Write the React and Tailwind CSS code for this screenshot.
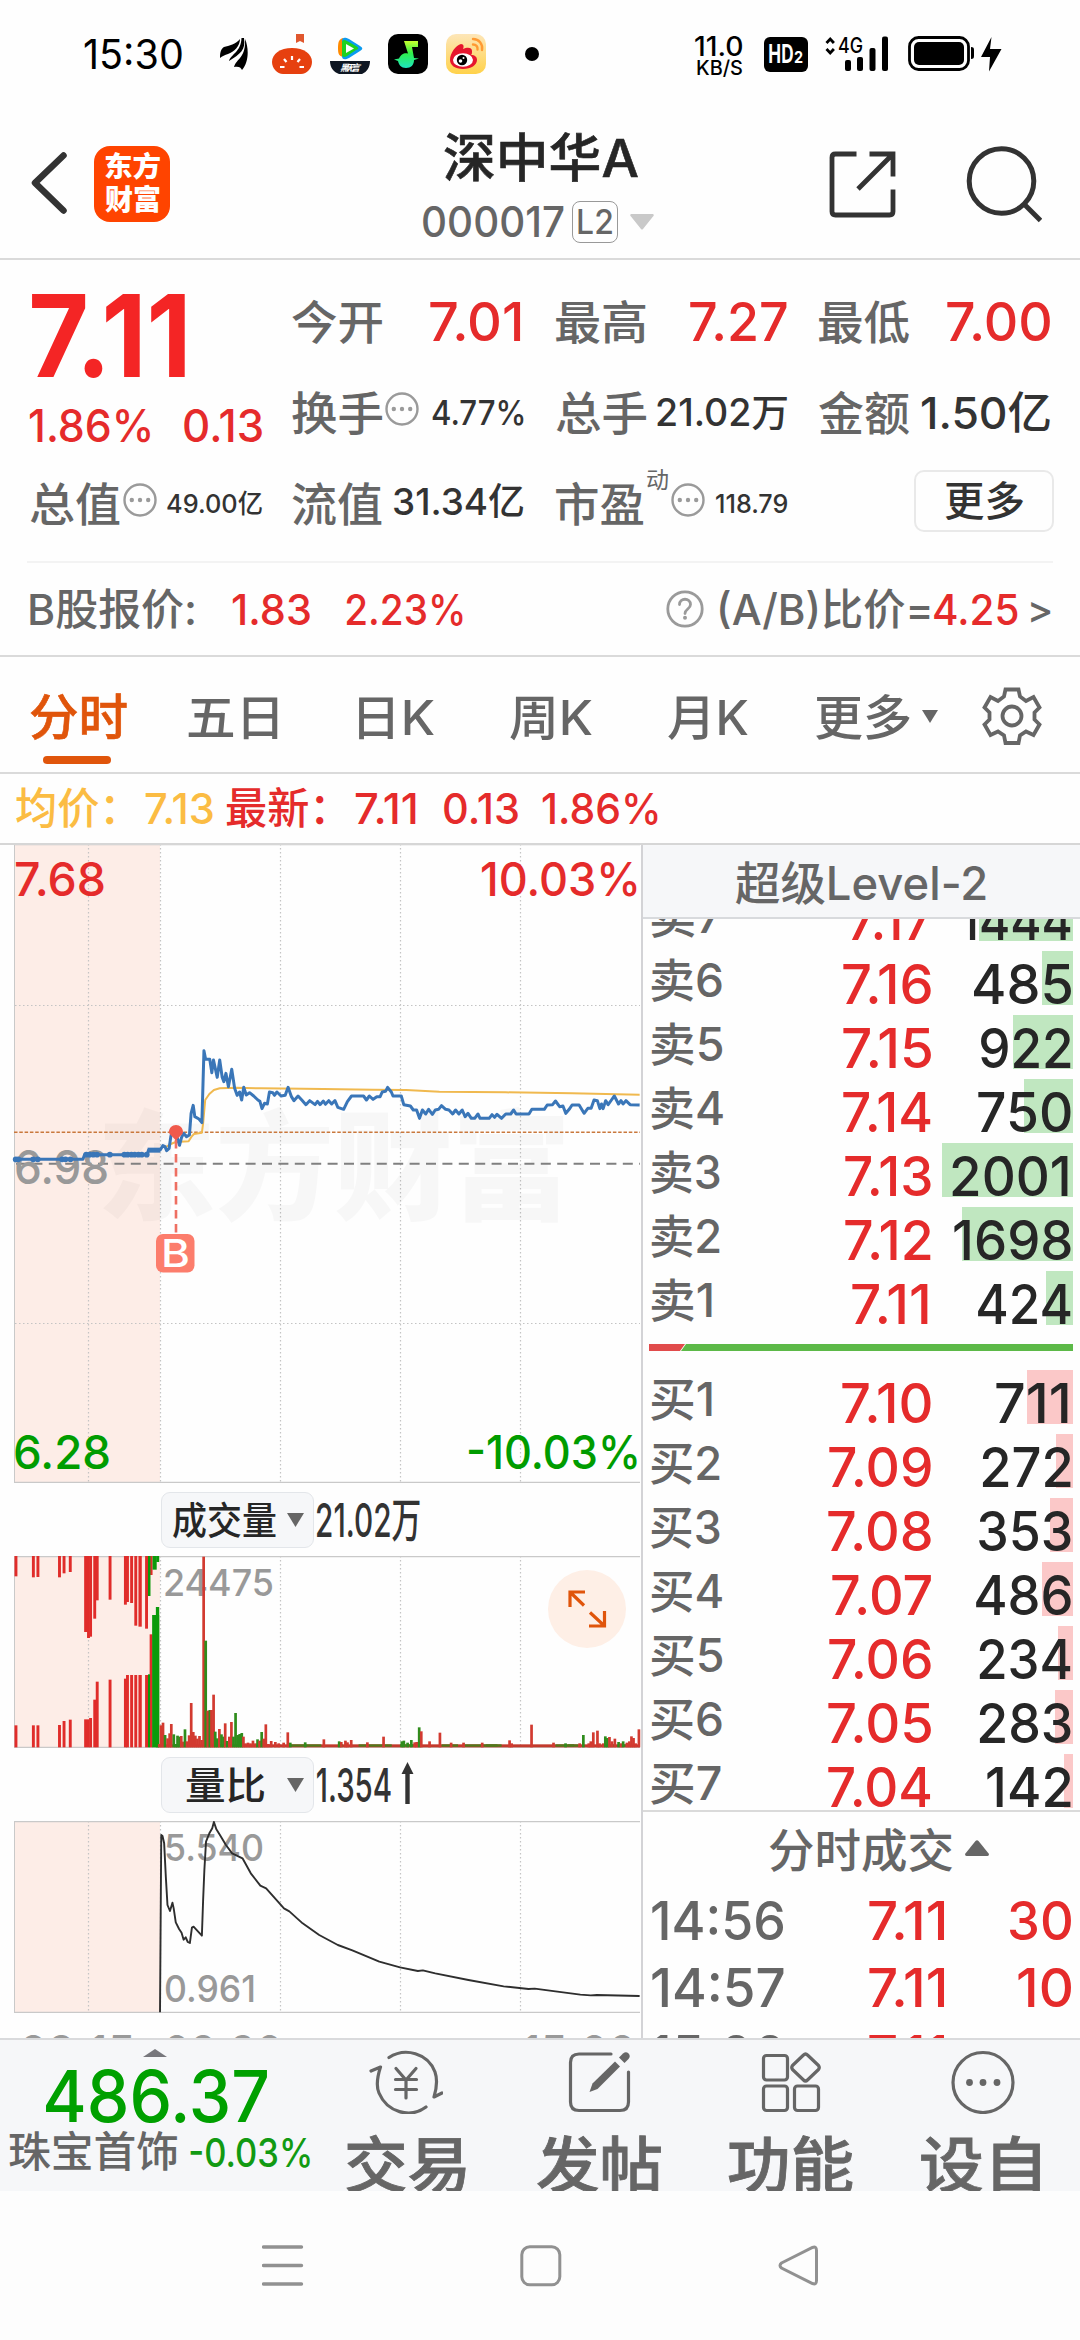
import { useLayoutEffect, useRef, useState } from "react";

// Single-line text that is squeezed or stretched so its ink fills exactly `w` pixels.
function Fit({ w, className = "", children }) {
  const ref = useRef(null);
  const [transform, setTransform] = useState("none");
  useLayoutEffect(() => {
    const cs = getComputedStyle(ref.current);
    const ctx = document.createElement("canvas").getContext("2d");
    ctx.font = `${cs.fontWeight} ${cs.fontSize} ${cs.fontFamily}`;
    const m = ctx.measureText(ref.current.textContent);
    const ink = m.actualBoundingBoxLeft + m.actualBoundingBoxRight;
    const s = w / ink;
    setTransform(`translateX(${m.actualBoundingBoxLeft * s}px) scaleX(${s})`);
  }, [w, children]);
  return (
    <span className={`block shrink-0 whitespace-nowrap leading-none ${className}`} style={{ width: w }}>
      <span ref={ref} className="inline-block origin-left whitespace-pre" style={{ transform }}>
        {children}
      </span>
    </span>
  );
}

const CHART_T = "scale(0.41454 0.33333)";

function StatusBar() {
  return (
    <div className="flex h-[108px] shrink-0 items-center pl-[84px] text-black">
      <Fit w={98} className="text-[41px] font-normal">15:30</Fit>
      <svg className="ml-[38px]" width="28" height="40" viewBox="220 34 28 40">
        <path d="M220 58C220 52 221 49 224 47C229 46 236 44 240 39C240 46 234 52 228 54C225 55 222 56 220 58Z" />
        <path d="M229 61C231 54 241 52 241.5 38L244 38C246 50 240 54 229 61Z" />
        <path d="M234 67C237 58 246 58 245 39C249 48 249 62 242 70C241 67 238 66 234 67Z" />
      </svg>
      <svg className="ml-6" width="40" height="40" viewBox="0 0 40 40">
        <path d="M24 0h8v9l-4-2-4 2z" fill="#e0572e" />
        <path d="M20 14c12 0 20 6 20 14 0 6-5 12-11 12H11C5 40 0 34 0 28 0 20 8 14 20 14z" fill="#e6400f" />
        <path d="M20 22v4M12 25l2.500 3M28 25l-2.500 3M8 33h4.500M32 33h-4.500" stroke="#fff" strokeWidth="2.200" />
      </svg>
      <svg className="ml-[18px]" width="40" height="40" viewBox="0 0 40 40">
        <path d="M13 4C9 5 8 8 8 14s1 8 5 9z" fill="#ff8a00" />
        <path d="M12 7c0-4 3-4 7-2l11 7c3 2 3 3 0 5l-11 7c-4 2-7 2-7-2z" fill="#0a9bf0" />
        <path d="M12 9c0-3 2-4 5-2l9 5c3 2 3 3 0 4l-9 6c-3 2-5 1-5-2z" fill="#1fd11f" />
        <path d="M16 10l8 4.500-8 4.500z" fill="#fff" />
        <path d="M0 27h40c0 6-3 11-8 13H9C3 38 0 33 0 27z" fill="#0e1622" />
        <text x="10" y="37" fontSize="9" fontWeight="700" fontStyle="italic" fill="#fff" textLength="20">黑无言</text>
      </svg>
      <svg className="ml-[18px]" width="40" height="40" viewBox="0 0 40 40">
        <defs>
          <linearGradient id="note" x1="0" y1="0" x2="0" y2="1">
            <stop offset="0" stopColor="#c8ff2e" />
            <stop offset="0.45" stopColor="#2ff04a" />
            <stop offset="1" stopColor="#1ee5c0" />
          </linearGradient>
        </defs>
        <rect width="40" height="40" rx="10" />
        <path d="M16 7h14v6h-6l2 11 5 .500-5 1.500c0 5-3 8-8 8s-7-3-8-7l-4-1.500 5-1c2-5 6-6 9-5z" fill="url(#note)" />
      </svg>
      <svg className="ml-[18px]" width="40" height="40" viewBox="0 0 40 40">
        <defs>
          <linearGradient id="wb" x1="0" y1="0" x2="0" y2="1">
            <stop offset="0" stopColor="#fde6b8" />
            <stop offset="1" stopColor="#ffd24a" />
          </linearGradient>
        </defs>
        <rect width="40" height="40" rx="10" fill="url(#wb)" />
        <path d="M4 26C4 19 10 11 15 10c3 0 3 3 2 5 4-2 9-2 9 2 0 2 0 3-1 4 4 0 6 2 6 5 0 5-6 9-14 9S4 31 4 26z" fill="#e6162d" />
        <ellipse cx="17" cy="26" rx="10" ry="6.800" fill="#fff" />
        <circle cx="16" cy="26" r="5.200" />
        <circle cx="14.500" cy="27" r="1.800" fill="#fff" />
        <circle cx="17.500" cy="24" r="1" fill="#fff" />
        <path d="M27 5c6 0 10 5 9 11M27 10.500c3 0 5 2 4.500 5" fill="none" stroke="#ff9a33" strokeWidth="2.400" strokeLinecap="round" />
      </svg>
      <span className="ml-[39px] size-3.5 rounded-full bg-black" />
      <div className="ml-[156px] flex flex-col items-end gap-0 pt-0.5 font-medium">
        <Fit w={47} className="text-[27px]">11.0</Fit>
        <Fit w={45} className="-mt-[2px] text-[20px]">KB/S</Fit>
      </div>
      <div className="ml-[22px] flex h-[35px] w-11 items-center justify-center rounded-md bg-black text-white">
        <Fit w={24} className="text-[26px] font-bold">HD</Fit>
        <Fit w={9} className="ml-px mt-1.5 text-[16px] font-bold">2</Fit>
      </div>
      <svg className="ml-[17px]" width="64" height="36" viewBox="825 36 64 36">
        <path d="M826.500 43l3.700-4 3.700 4M826.500 49l3.700 4 3.700-4" fill="none" stroke="#000" strokeWidth="2.800" />
        <text x="838" y="53" fontSize="22" fontWeight="500" textLength="25" lengthAdjust="spacingAndGlyphs">4G</text>
        <rect x="845" y="60" width="6" height="11" rx="2" />
        <rect x="857" y="57" width="6" height="14" rx="2" />
        <rect x="869.500" y="48" width="6" height="23" rx="2" />
        <rect x="882" y="36.500" width="6" height="34.500" rx="2" />
      </svg>
      <svg className="ml-[19px]" width="95" height="36" viewBox="908 36 95 36">
        <rect x="909.500" y="37.500" width="59" height="32" rx="9" fill="none" stroke="#000" strokeWidth="2.800" />
        <rect x="914" y="42" width="50" height="23" rx="5" />
        <path d="M971 47c2.500 0 3 1 3 3v6c0 2-.500 3-3 3z" />
        <path d="M991.500 37L981 57h9l-1 14.500L1001.500 49H990z" />
      </svg>
    </div>
  );
}

function Header() {
  return (
    <header className="flex h-[152px] shrink-0 items-center border-b-2 border-[#dadada] pl-[30px]">
      <svg width="38" height="64" viewBox="30 152 38 64">
        <path d="M63.500 156.500L35 183.800L63.500 211.500" fill="none" stroke="#333" strokeWidth="6.500" strokeLinecap="round" strokeLinejoin="round" />
      </svg>
      <div className="ml-[26px] mt-px flex h-[76px] w-[76px] flex-col items-center justify-center gap-[5px] rounded-[16px] bg-[#ff4400] font-black text-white">
        <Fit w={55} className="text-[28px]">东方</Fit>
        <Fit w={55} className="text-[28px]">财富</Fit>
      </div>
      <div className="ml-[253px] flex flex-col pt-[9px]">
        <Fit w={194} className="ml-[21px] text-[52px] font-medium text-[#262626] [-webkit-text-stroke:0.6px]">深中华A</Fit>
        <div className="mt-4 flex items-center text-[#666]">
          <Fit w={141} className="text-[42px] font-medium">000017</Fit>
          <div className="ml-2 flex h-[42px] w-[46px] items-center justify-center rounded-lg border-[1.5px] border-[#999]">
            <Fit w={34} className="text-[34px] font-medium">L2</Fit>
          </div>
          <svg className="ml-3" width="24" height="16" viewBox="0 0 24 16">
            <path d="M1 0h22q1.500 1 0 2.500L13 15q-1 1-2 0L1 2.500q-1.500-1.500 0-2.500z" fill="#c9c9c9" />
          </svg>
        </div>
      </div>
      <svg className="ml-[175px] mt-0.5" width="67" height="67" viewBox="828.500 150.500 67 67" fill="none" stroke="#333" strokeWidth="4.800">
        <path d="M856 153.500H835q-3.500 0-3.500 3.500V211q0 3.500 3.500 3.500H889q3.500 0 3.500-3.500V189M869 153.500H892.500V176M892 154L857.500 188.500" />
      </svg>
      <svg className="ml-[70px] mt-px" width="76" height="78" viewBox="965 144 76 78" fill="none" stroke="#333" strokeWidth="5">
        <circle cx="1000.500" cy="180" r="32.300" />
        <path d="M1023.500 203.500L1039.500 219.500" />
      </svg>
    </header>
  );
}

function Dots({ className = "" }) {
  return (
    <svg className={`shrink-0 ${className}`} width="34" height="34" viewBox="0 0 34 34">
      <circle cx="17" cy="17" r="15.500" fill="none" stroke="#9a9a9a" strokeWidth="2.400" />
      <circle cx="8.800" cy="17" r="2.200" fill="#9a9a9a" />
      <circle cx="17" cy="17" r="2.200" fill="#9a9a9a" />
      <circle cx="25.200" cy="17" r="2.200" fill="#9a9a9a" />
    </svg>
  );
}

function Cell({ label, lw = 90, extra, children }) {
  return (
    <div className="flex h-[91px] items-center">
      <Fit w={lw} className="text-[46px] font-medium text-[#666]">{label}</Fit>
      {extra}
      <div className="ml-auto font-medium text-[#333]">{children}</div>
    </div>
  );
}

function Quote() {
  return (
    <section className="shrink-0 border-b-2 border-[#dadada]">
      <div className="flex h-[301px] pl-[30px] pt-4">
        <div className="flex w-[232px] flex-col">
          <div className="flex h-[182px] flex-col">
            <Fit w={153} className="ml-0.5 mt-[3px] text-[114px] font-bold text-[#f42525]">7.11</Fit>
            <div className="mt-[10px] flex justify-between font-[550] text-[#e52b2b]">
              <Fit w={120} className="text-[45px]">1.86%</Fit>
              <Fit w={78} className="text-[45px]">0.13</Fit>
            </div>
          </div>
          <Cell label="总值" extra={<Dots className="mb-2 ml-[3px]" />}>
            <Fit w={95} className="text-[26px]">49.00亿</Fit>
          </Cell>
        </div>
        <div className="ml-[30px] w-[232px]">
          <Cell label="今开"><Fit w={91} className="mr-[3px] text-[54px] font-[550] text-[#e52b2b]">7.01</Fit></Cell>
          <Cell label="换手" extra={<Dots className="mb-2 ml-[3px]" />}>
            <Fit w={92} className="text-[34px]">4.77%</Fit>
          </Cell>
          <Cell label="流值"><Fit w={130} className="mb-1 text-[37px]">31.34亿</Fit></Cell>
        </div>
        <div className="ml-8 w-[231px]">
          <Cell label="最高"><Fit w={97} className="text-[54px] font-[550] text-[#e52b2b]">7.27</Fit></Cell>
          <Cell label="总手"><Fit w={130} className="mb-0.5 text-[38px]">21.02万</Fit></Cell>
          <Cell
            label="市盈"
            lw={88}
            extra={
              <>
                <Fit w={21} className="mb-[46px] ml-[3px] text-[23px] text-[#666]">动</Fit>
                <Dots className="mb-2 ml-[3px]" />
              </>
            }
          >
            <Fit w={71} className="text-[26px]">118.79</Fit>
          </Cell>
        </div>
        <div className="ml-8 w-[231px]">
          <Cell label="最低"><Fit w={103} className="text-[54px] font-[550] text-[#e52b2b]">7.00</Fit></Cell>
          <Cell label="金额"><Fit w={128} className="text-[44px]">1.50亿</Fit></Cell>
          <div className="ml-[95px] mt-3 flex h-[62px] w-[140px] items-center justify-center rounded-[10px] border-2 border-[#e9e9e9] text-[#333]">
            <Fit w={78} className="text-[41px] font-medium">更多</Fit>
          </div>
        </div>
      </div>
      <div className="mx-[27px] flex h-[94px] items-center border-t-2 border-[#f3f3f3] pl-[3px] text-[43px] font-medium text-[#666]">
        <Fit w={164}>B股报价:</Fit>
        <Fit w={78} className="ml-[38px] font-[550] text-[#e52b2b]">1.83</Fit>
        <Fit w={117} className="ml-9 font-[550] text-[#e52b2b]">2.23%</Fit>
        <svg className="ml-[203px]" width="38" height="38" viewBox="0 0 38 38" fill="none" stroke="#9a9a9a" strokeWidth="2.800">
          <circle cx="19" cy="19" r="17.200" />
          <path d="M13.500 14.500c0-7 11-7 11 0 0 4.500-5.500 4.500-5.500 9" strokeLinecap="round" />
          <circle cx="19" cy="27.800" r="2" fill="#9a9a9a" stroke="none" />
        </svg>
        <Fit w={210} className="ml-4">(A/B)比价=</Fit>
        <Fit w={84} className="ml-1 font-[550] text-[#e52b2b]">4.25</Fit>
        <Fit w={20} className="ml-[13px] text-[38px]">&gt;</Fit>
      </div>
    </section>
  );
}

function Tabs() {
  return (
    <nav className="flex h-[117px] shrink-0 items-center border-b-2 border-[#dadada] pl-[30px] pt-[7px] text-[48px] font-medium text-[#666]">
      <div className="flex h-[97px] flex-col items-center pt-[23px] text-[#e0550b]">
        <Fit w={97} className="text-[49px] font-medium [-webkit-text-stroke:0.6px]">分时</Fit>
        <span className="mr-1 mt-[14px] h-2 w-[68px] rounded-full bg-[#e0550b]" />
      </div>
      <Fit w={90} className="ml-[61px]">五日</Fit>
      <Fit w={75} className="ml-[81px]">日K</Fit>
      <Fit w={82} className="ml-[76px]">周K</Fit>
      <Fit w={80} className="ml-[76px]">月K</Fit>
      <Fit w={94} className="ml-[68px]">更多</Fit>
      <svg className="mb-1 ml-3" width="16" height="13" viewBox="0 0 16 13"><path d="M0 0h16L8 13z" fill="#666" /></svg>
      <svg className="mb-1 ml-[44px]" width="60" height="60" viewBox="981 685 60 60" fill="none" stroke="#666" strokeWidth="3.800">
        <path d="M1004.500 688.500h13l1.500 7 6 4.500 7.500-4 6 10.500-5 5v7l5 5-6 10.500-7.500-3.500-6 4-1.500 7.500h-13l-1.500-7.500-6-4-7.500 3.500-6-10.500 5-5v-7l-5-5 6-10.500 7.500 4 6-4.500z" />
        <circle cx="1011" cy="715" r="9.500" />
      </svg>
    </nav>
  );
}

function AvgRow() {
  return (
    <div className="flex h-[71px] shrink-0 items-center border-b-2 border-[#d6d6d6] pl-4 text-[43px] font-medium text-[#e52b2b]">
      <Fit w={98} className="text-[#fbbc43]">均价：</Fit>
      <Fit w={68} className="ml-[31px] text-[#fbbc43]">7.13</Fit>
      <Fit w={98} className="ml-[13px]">最新：</Fit>
      <Fit w={61} className="ml-[31px]">7.11</Fit>
      <Fit w={74} className="ml-[28px]">0.13</Fit>
      <Fit w={116} className="ml-6">1.86%</Fit>
    </div>
  );
}

const PRICE =
  "34,485 38,478 200,478 204,464 262,464 355,464 358,451 386,451 393,437 398,440 402,452 408,445 412,410 417,385 424,398 433,436 438,412 443,400 450,410 457,405 461,340 466,316 470,350 480,357 487,368 492,152 496,178 506,178 511,218 515,180 524,232 530,180 536,232 540,245 545,220 551,260 559,208 566,265 572,286 578,276 583,300 588,262 594,285 602,278 612,288 622,300 627,304 632,326 638,310 645,312 650,276 658,278 662,286 668,276 678,288 688,286 695,262 703,290 709,302 719,288 728,300 738,314 747,302 760,314 766,304 772,314 780,303 785,313 793,302 800,312 808,302 815,322 829,328 838,305 848,288 877,288 884,300 891,288 900,298 909,290 917,290 922,276 930,274 935,262 944,276 948,288 968,288 974,314 990,318 997,330 1005,330 1012,355 1019,330 1027,342 1034,328 1043,343 1050,330 1058,328 1065,317 1075,328 1083,330 1092,342 1099,330 1107,342 1115,330 1122,350 1129,340 1137,355 1145,355 1153,342 1158,355 1180,355 1187,344 1193,352 1199,343 1210,355 1220,342 1232,342 1239,330 1245,342 1276,342 1283,328 1313,328 1320,315 1333,314 1340,303 1350,320 1358,318 1365,340 1373,328 1380,315 1397,315 1409,340 1418,325 1426,325 1433,300 1441,302 1447,326 1451,312 1455,326 1461,302 1467,314 1475,300 1482,288 1492,312 1498,302 1503,312 1510,302 1520,314 1543,315";
const AVG =
  "393,440 402,440 412,432 424,426 455,424 462,410 468,402 487,398 490,370 495,300 505,282 516,270 530,265 570,263 630,265 780,267 900,269 980,270 1060,275 1220,277 1380,280 1543,284";
const RATIO =
  "386,787 389,255 392,258 396,280 400,380 404,465 410,483 416,458 419,475 424,517 432,537 438,548 443,569 448,562 453,576 458,579 463,533 467,530 473,538 487,557 490,450 493,360 497,275 505,250 512,235 516,216 522,238 532,258 545,285 560,310 585,325 605,370 628,407 642,415 685,475 698,484 730,520 770,555 815,585 850,601 915,635 965,652 1008,663 1020,661 1050,670 1130,690 1215,709 1275,717 1290,716 1340,724 1400,734 1425,736 1440,735 1543,738";

const PRE_DOTS = [38, 44, 80, 91, 150, 158, 170, 208, 216, 225, 234, 265, 300, 308, 317, 325, 334, 342, 354];

// [x, from, to, width] in call-auction volume coordinates
const AUCTION_RED = [
  [35, 258, 319, 7], [77, 258, 322, 7], [88, 258, 321, 7], [140, 258, 322, 7], [151, 258, 310, 7], [166, 258, 306, 7],
  [203, 258, 486, 9], [210, 258, 504, 7], [216, 258, 500, 6], [225, 258, 446, 7], [231, 258, 391, 7], [262, 258, 389, 7],
  [299, 258, 404, 7], [304, 258, 396, 7], [314, 258, 399, 7], [324, 258, 467, 7], [334, 258, 470, 8], [350, 258, 476, 7], [362, 258, 315, 6],
  [35, 766, 832, 7], [77, 766, 832, 7], [88, 766, 832, 7], [140, 765, 832, 7], [151, 753, 832, 7], [166, 749, 832, 7],
  [203, 748, 832, 13], [215, 744, 832, 7], [225, 689, 832, 7], [231, 635, 832, 7], [262, 629, 832, 7], [299, 626, 832, 7],
  [304, 615, 832, 7], [314, 615, 832, 7], [324, 615, 832, 7], [334, 615, 832, 8], [350, 615, 832, 7], [361, 493, 832, 7],
];
const AUCTION_GREEN = [
  [357, 258, 378, 6], [368, 258, 299, 10], [377, 258, 276, 7], [357, 613, 832, 5], [367, 435, 832, 17], [376, 411, 832, 8],
];
// [x, top, colour]
const VOL = [
  [384, 822, 0], [388, 766, 0], [393, 758, 0], [398, 795, 1], [404, 805, 0], [409, 790, 0], [413, 762, 0], [419, 793, 1], [424, 822, 1], [428, 797, 1], [433, 800, 1], [437, 798, 0], [441, 815, 0],
  [446, 778, 1], [451, 814, 0], [456, 796, 0], [461, 699, 0], [466, 786, 0], [471, 797, 0], [476, 806, 0], [481, 798, 0], [486, 810, 0], [491, 260, 0], [496, 512, 1], [501, 722, 0], [506, 720, 1], [510, 720, 0], [515, 674, 0], [519, 785, 1], [524, 805, 1], [529, 777, 0],
  [534, 793, 1], [539, 800, 1], [543, 760, 0], [548, 813, 1], [553, 800, 0], [558, 756, 0], [563, 800, 1], [568, 729, 1], [573, 795, 1], [578, 792, 1], [583, 789, 1], [587, 800, 0], [592, 820, 0], [598, 818, 0], [604, 820, 0], [610, 812, 0], [616, 820, 0], [621, 808, 1], [626, 812, 0], [631, 786, 1], [636, 806, 0], [641, 763, 0],
  [647, 822, 0], [654, 813, 0], [664, 816, 0], [672, 820, 0], [684, 818, 0], [694, 787, 0], [700, 818, 1], [736, 817, 1], [781, 808, 0], [818, 814, 1], [823, 816, 0], [833, 812, 0], [838, 817, 0], [847, 810, 0], [886, 817, 0], [925, 800, 0], [969, 814, 1], [974, 812, 1], [983, 818, 1],
  [992, 810, 1], [1000, 817, 0], [1005, 816, 0], [1011, 772, 1], [1016, 784, 0], [1036, 814, 0], [1061, 788, 0], [1088, 818, 0], [1118, 818, 0], [1163, 818, 0], [1229, 811, 0], [1234, 820, 0], [1282, 764, 0], [1335, 818, 0], [1364, 820, 1], [1398, 820, 0], [1407, 795, 1], [1420, 820, 0], [1425, 814, 0], [1431, 787, 0], [1441, 782, 0], [1446, 820, 0],
  [1455, 820, 0], [1460, 799, 1], [1465, 804, 1], [1470, 801, 0], [1476, 814, 0], [1483, 806, 0], [1492, 816, 1], [1498, 820, 0], [1503, 814, 1], [1512, 818, 0], [1518, 814, 0], [1523, 799, 0], [1528, 804, 0], [1533, 820, 0], [1541, 778, 0],
];
const BASE_GREEN = [[420, 20], [530, 60], [700, 75], [815, 12], [865, 80], [965, 45], [1065, 40], [1120, 80], [1172, 38], [1340, 45], [1370, 25], [1460, 25], [1490, 25]];

function Grid({ top, bottom }) {
  return (
    <>
      <rect x="15" y={top} width="145" height={bottom - top} fill="#fdede7" />
      <g stroke="#c4c4c4" strokeWidth="1.200" strokeDasharray="1.500 2.500">
        {[88.500, 160.500, 280.500, 400.500, 520.500].map((x) => (
          <line key={x} x1={x} x2={x} y1={top} y2={bottom} />
        ))}
      </g>
      <line x1="14.500" x2="14.500" y1={top} y2={bottom} stroke="#c9c9c9" />
      <line x1="14" x2="640" y1={bottom - 0.500} y2={bottom - 0.500} stroke="#c9c9c9" strokeWidth="1.500" />
      <line x1="14" x2="640" y1={top + 0.500} y2={top + 0.500} stroke="#c9c9c9" strokeWidth="1.500" />
    </>
  );
}

function Label({ x, cy, w, size, fill, children }) {
  return (
    <text x={x} y={cy + size * 0.3635} fontSize={size} fill={fill} textLength={w} lengthAdjust="spacingAndGlyphs" fontWeight="500">
      {children}
    </text>
  );
}

function IndicatorRow({ name, nameW, value, valueW, up }) {
  return (
    <div className="flex h-[73px] items-center pl-[161px] text-[#333]">
      <div className="flex h-14 w-[153px] items-center justify-end rounded-[9px] border-[1.5px] border-[#e3e6ea] bg-[#f6f7f9] pr-[9px]">
        <Fit w={nameW} className="text-[38px] font-medium text-[#262626]">{name}</Fit>
        <svg className={nameW > 90 ? "ml-[11px]" : "ml-[23px]"} width="17" height="14" viewBox="0 0 17 14"><path d="M0 0h17L8.500 14z" fill="#666" /></svg>
      </div>
      <Fit w={valueW} className="ml-[3px] text-[47px] font-medium">{value}</Fit>
      {up && (
        <svg className="mb-1 ml-[10px]" width="13" height="42" viewBox="0 0 13 42">
          <path d="M6.500 0L12.500 12H8.700V42H4.300V12H.500z" fill="#333" />
        </svg>
      )}
    </div>
  );
}

function Charts() {
  return (
    <div className="h-[1193px] w-[641px] overflow-hidden">
      <svg width="641" height="638" viewBox="0 845 641 638">
        <Grid top={844} bottom={1483} />
        <g stroke="#c4c4c4" strokeWidth="1.200" strokeDasharray="1.500 2.500">
          <line x1="15" x2="640" y1="1005.500" y2="1005.500" />
          <line x1="15" x2="640" y1="1323.500" y2="1323.500" />
        </g>
        <text x="97" y="1211" fontSize="119" fontWeight="900" fill="#000" fillOpacity="0.028" textLength="474">东方财富</text>
        <line x1="16" x2="640" y1="1163.700" y2="1163.700" stroke="#808080" strokeWidth="2" strokeDasharray="10 6.400" />
        <line x1="14" x2="640" y1="1132.300" y2="1132.300" stroke="#c9783c" strokeWidth="1.500" strokeDasharray="3.500 1.800" />
        <Label x={14} cy={1166.500} w={95} size={47} fill="#999">6.98</Label>
        <g transform={`translate(0 1000) ${CHART_T}`} fill="none" strokeLinejoin="round">
          <polyline points={AVG} stroke="#f0b94f" strokeWidth="2" vectorEffect="non-scaling-stroke" />
          <polyline points={PRICE} stroke="#3a76b8" strokeWidth="3" vectorEffect="non-scaling-stroke" />
          {PRE_DOTS.map((x) => (
            <ellipse key={x} cx={x} cy={x < 200 ? 478 : 464} rx="7" ry="8.500" fill="#3a76b8" />
          ))}
          <rect x="356" y="443" width="30" height="15" fill="#3a76b8" />
        </g>
        <line x1="176" x2="176" y1="1140" y2="1234" stroke="#ee6f62" strokeWidth="2.600" strokeDasharray="8.500 5.500" />
        <path d="M176 1125c4 0 7 3 7 7 0 3-4 4-7 9-3-5-7-6-7-9 0-4 3-7 7-7z" fill="#f05a4c" />
        <rect x="156" y="1234" width="38.500" height="38.500" rx="7" fill="#fc7d6c" />
        <Label x={161} cy={1253.500} w={29} size={38} fill="#fff">B</Label>
        <Label x={14} cy={879} w={92} size={47} fill="#e52b2b">7.68</Label>
        <Label x={480} cy={879} w={161} size={47} fill="#e52b2b">10.03%</Label>
        <Label x={13} cy={1452} w={98} size={47} fill="#009c00">6.28</Label>
        <Label x={466} cy={1452} w={175} size={47} fill="#009c00">-10.03%</Label>
      </svg>
      <IndicatorRow name="成交量" nameW={103} value="21.02万" valueW={103} />
      <svg width="641" height="192" viewBox="0 1556 641 192">
        <Grid top={1556} bottom={1748} />
        <Label x={163} cy={1582.500} w={111} size={37} fill="#999">24475</Label>
        <g transform={`translate(0 1470) ${CHART_T}`}>
          {AUCTION_RED.map(([x, a, b, w], i) => (
            <rect key={i} x={x} y={a} width={w} height={b - a} fill="#e02c2a" />
          ))}
          {AUCTION_GREEN.map(([x, a, b, w], i) => (
            <rect key={i} x={x} y={a} width={w} height={b - a} fill="#0b9a0b" />
          ))}
          <rect x="385" y="823" width="1158" height="9" fill="#c23a2c" />
          {BASE_GREEN.map(([x, w], i) => (
            <rect key={i} x={x} y="823" width={w} height="7" fill="#4f7a1c" />
          ))}
          {VOL.map(([x, y, g], i) => (
            <rect key={i} x={x - 3} y={y} width="6.500" height={832 - y} fill={g ? "#2f8c1c" : "#d23a30"} />
          ))}
        </g>
        <circle cx="587" cy="1609" r="39" fill="#feefe6" />
        <g fill="none" stroke="#e0550b" strokeWidth="3.200">
          <path d="M585 1592H570V1607M570.500 1592.500L584 1605.500" />
          <path d="M589 1626H604.500V1611M604 1625.500L590 1612.500" />
        </g>
      </svg>
      <IndicatorRow name="量比" nameW={78} value="1.354" valueW={74} up />
      <svg width="641" height="192" viewBox="0 1821 641 192">
        <Grid top={1821} bottom={2013} />
        <Label x={164} cy={1848} w={100} size={37} fill="#999">5.540</Label>
        <Label x={164} cy={1989} w={92} size={37} fill="#999">0.961</Label>
        <polyline transform={`translate(0 1750) ${CHART_T}`} points={RATIO} fill="none" stroke="#2e2e2e" strokeWidth="1.900" strokeLinejoin="round" vectorEffect="non-scaling-stroke" />
      </svg>
      <div className="flex h-[25px] overflow-hidden pl-[21px] pt-[15px] text-[47px] font-medium text-[#999]">
        <Fit w={112}>09:15</Fit>
        <Fit w={116} className="ml-8">09:30</Fit>
        <Fit w={110} className="ml-[243px]">15:00</Fit>
      </div>
    </div>
  );
}

// name, name width, price, price width, price right inset, volume, volume width, volume right inset, bar width
const SELLS = [
  ["卖7", 71, "7.17", 82, 0, "1444", 110, 0, 94],
  ["卖6", 71, "7.16", 88, 0, "485", 97, 0, 31],
  ["卖5", 71, "7.15", 88, 0, "922", 90, 0, 60],
  ["卖4", 72, "7.14", 88, 0, "750", 93, 0, 49],
  ["卖3", 69, "7.13", 86, 0, "2001", 116, 3, 131],
  ["卖2", 69, "7.12", 86, 0, "1698", 117, 0, 111],
  ["卖1", 61, "7.11", 76, 3, "424", 93, 0, 27],
];
const BUYS = [
  ["买1", 61, "7.10", 89, 0, "711", 72, 3, 46],
  ["买2", 69, "7.09", 102, 0, "272", 89, 0, 17],
  ["买3", 69, "7.08", 103, 0, "353", 92, 0, 23],
  ["买4", 71, "7.07", 99, 0, "486", 95, 0, 31],
  ["买5", 71, "7.06", 102, 0, "234", 92, 0, 15],
  ["买6", 71, "7.05", 103, 0, "283", 92, 0, 18],
  ["买7", 70, "7.04", 103, 0, "142", 84, 0, 9],
];

function Depth({ row, bar }) {
  const [name, nw, price, pw, pr, vol, vw, vr, bw] = row;
  return (
    <div className="relative flex h-16 shrink-0 items-center pl-2 font-medium">
      <span className={`absolute right-[7px] top-[5px] h-[54px] ${bar}`} style={{ width: bw }} />
      <Fit w={nw} className="relative mt-[3px] text-[46px] text-[#666]">{name}</Fit>
      <div className="relative ml-auto mt-[13px] flex text-[55px] font-[550]">
        <Fit w={pw} className="text-[#e52b2b]">{price}</Fit>
        <span style={{ width: pr }} />
        <div className="flex w-[149px] justify-end pr-[9px]">
          <Fit w={vw} className="text-[#262626]">{vol}</Fit>
          <span style={{ width: vr }} />
        </div>
      </div>
    </div>
  );
}

const TRADES = [
  ["14:56", 132, "30", 61],
  ["14:57", 132, "10", 53],
  ["15:00", 132, "", 0],
];

function Level2() {
  return (
    <div className="flex h-[1193px] w-[439px] flex-col overflow-hidden border-l-2 border-[#d3d3d6]">
      <div className="flex h-[74px] shrink-0 items-center border-b-2 border-[#d8dadd] bg-[#f6f7f9] pl-[93px] pt-[3px] text-[46px] font-medium text-[#666]">
        <Fit w={250}>超级Level-2</Fit>
      </div>
      <div className="flex h-[416px] shrink-0 flex-col justify-end overflow-hidden pb-[5px]">
        {SELLS.map((r) => <Depth key={r[0]} row={r} bar="bg-[#c0e7c0]" />)}
      </div>
      <div className="mx-[7px] ml-1.5 mt-[9px] flex h-[7px] shrink-0">
        <svg width="38" height="7" viewBox="0 0 38 7">
          <path d="M0 0h36l-5 7H0z" fill="#e14b4b" />
          <path d="M38 0h-1l-5 7h6z" fill="#5cb948" />
        </svg>
        <span className="flex-1 bg-[#5cb948]" />
      </div>
      <div className="mt-[14px] h-[447px] shrink-0 overflow-hidden border-b-2 border-[#dadada]">
        {BUYS.map((r) => <Depth key={r[0]} row={r} bar="bg-[#fbc8c8]" />)}
      </div>
      <div className="flex h-[76px] shrink-0 items-center pl-[126px] text-[46px] font-medium text-[#666]">
        <Fit w={184}>分时成交</Fit>
        <svg className="mb-1 ml-3" width="24" height="16" viewBox="0 0 24 16"><path d="M10.500 1q1.500-1.500 3 0L24 14q0 2-1.500 2h-21Q0 16 0 14z" fill="#666" /></svg>
      </div>
      {TRADES.map(([t, tw, v, vw]) => (
        <div key={t} className="flex h-[67px] shrink-0 items-center pb-0.5 pl-[9px] text-[54px] font-[550] text-[#e52b2b]">
          <Fit w={tw} className="text-[#666]">{t}</Fit>
          <Fit w={76} className="ml-[85px]">7.11</Fit>
          {v && <div className="ml-auto pr-[9px]"><Fit w={vw}>{v}</Fit></div>}
        </div>
      ))}
    </div>
  );
}

function BottomItem({ label, w, className, icon }) {
  return (
    <div className={`flex flex-col items-center pt-[6px] ${className}`}>
      <div className="shrink-0">{icon}</div>
      <Fit w={w} className="mt-[22px] text-[61px] font-medium [-webkit-text-stroke:0.8px]">{label}</Fit>
    </div>
  );
}

function BottomBar() {
  const line = { fill: "none", stroke: "#666", strokeWidth: 3.2, strokeLinecap: "round", strokeLinejoin: "round" };
  return (
    <div className="flex h-[153px] shrink-0 overflow-hidden border-t-2 border-[#d9dadc] bg-[#f6f7f9] text-[#666]">
      <div className="flex w-[310px] flex-col pl-[9px] pt-[9px]">
        <svg className="ml-[134px]" width="24" height="8" viewBox="0 0 24 8"><path d="M12 0l12 8H0z" fill="#77777c" /></svg>
        <Fit w={221} className="ml-[37px] mt-[3px] text-[72px] font-medium text-[#00a000]">486.37</Fit>
        <div className="-mt-px flex items-center font-medium">
          <Fit w={168} className="text-[42px]">珠宝首饰</Fit>
          <Fit w={120} className="ml-[13px] text-[39px] text-[#129a12]">-0.03%</Fit>
        </div>
      </div>
      <BottomItem
        label="交易"
        w={120}
        className="ml-9"
        icon={
          <svg width="74" height="68" viewBox="369 2046 74 68" {...line}>
            <path d="M389 2057.500C405 2047 428 2053 435 2072q3.500 10 -1 25l8-4" />
            <path d="M426 2107C410 2119 387 2112 379 2093q-4-9 1.500-26l-9.500 4" />
            <path d="M396 2068.500L406 2080L416 2068.500M395.500 2079.500H416.500M395.500 2089.500H416.500M406 2080V2098" />
          </svg>
        }
      />
      <BottomItem
        label="发帖"
        w={124}
        className="ml-[71px]"
        icon={
          <svg width="68" height="68" viewBox="564 2046 68 68" {...line}>
            <path d="M610 2054H578q-8.500 0-8.500 8.500V2102q0 8.500 8.500 8.500H619q8.500 0 8.500-8.500V2072" />
            <path d="M588.500 2092l3-8.500L614 2061.500l5 5L596.500 2089z" fill="#666" stroke="none" />
            <path d="M618 2057.500l4-4q3-2.500 5.500 0t0 5.500l-4 4z" fill="#666" stroke="none" />
          </svg>
        }
      />
      <BottomItem
        label="功能"
        w={124}
        className="ml-[68px]"
        icon={
          <svg width="68" height="68" viewBox="757 2046 68 68" {...line}>
            <rect x="763.500" y="2055.500" width="24" height="24.500" rx="3" />
            <rect x="763.500" y="2086" width="24" height="24.500" rx="3" />
            <rect x="794.500" y="2086" width="24" height="24.500" rx="3" />
            <path d="M803.500 2055q2-2 4 0l11 10.500q1.500 2 0 4l-11 10.500q-2 2-4 0l-11-10.500q-1.500-2 0-4z" />
          </svg>
        }
      />
      <BottomItem
        label="设自"
        w={119}
        className="ml-[68px]"
        icon={
          <svg width="68" height="68" viewBox="947 2046 68 68" {...line}>
            <circle cx="983" cy="2082.500" r="30" />
            <g fill="#666" stroke="none">
              <circle cx="969.500" cy="2082.500" r="3.400" />
              <circle cx="983" cy="2082.500" r="3.400" />
              <circle cx="997" cy="2082.500" r="3.400" />
            </g>
          </svg>
        }
      />
    </div>
  );
}

function SystemNav() {
  return (
    <div className="flex h-[149px] shrink-0 items-center bg-[#fdfdfd] pl-[262px]">
      <svg width="42" height="42" viewBox="262 2245 42 42" stroke="#919191" strokeWidth="3.400" strokeLinecap="round">
        <path d="M263.500 2247H301.500M263.500 2265.500H301.500M263.500 2284H301.500" />
      </svg>
      <svg className="ml-[216px]" width="42" height="42" viewBox="0 0 42 42" fill="none" stroke="#919191" strokeWidth="3">
        <rect x="1.800" y="1.800" width="38" height="38" rx="8" />
      </svg>
      <svg className="ml-[216px]" width="42" height="42" viewBox="778 2245 42 42" fill="none" stroke="#919191" strokeWidth="3">
        <path d="M781.500 2263l31-15.500q4-1.500 4 3v30q0 4.500-4 3l-31-15.500q-3-2.500 0-5z" />
      </svg>
    </div>
  );
}

export default function App() {
  return (
    <div className="flex h-[2340px] w-[1080px] flex-col overflow-hidden bg-[#fefefe] font-[Inter,'Noto_Sans_CJK_SC',sans-serif]">
      <StatusBar />
      <Header />
      <Quote />
      <Tabs />
      <AvgRow />
      <div className="flex h-[1193px] shrink-0">
        <Charts />
        <Level2 />
      </div>
      <BottomBar />
      <SystemNav />
    </div>
  );
}
